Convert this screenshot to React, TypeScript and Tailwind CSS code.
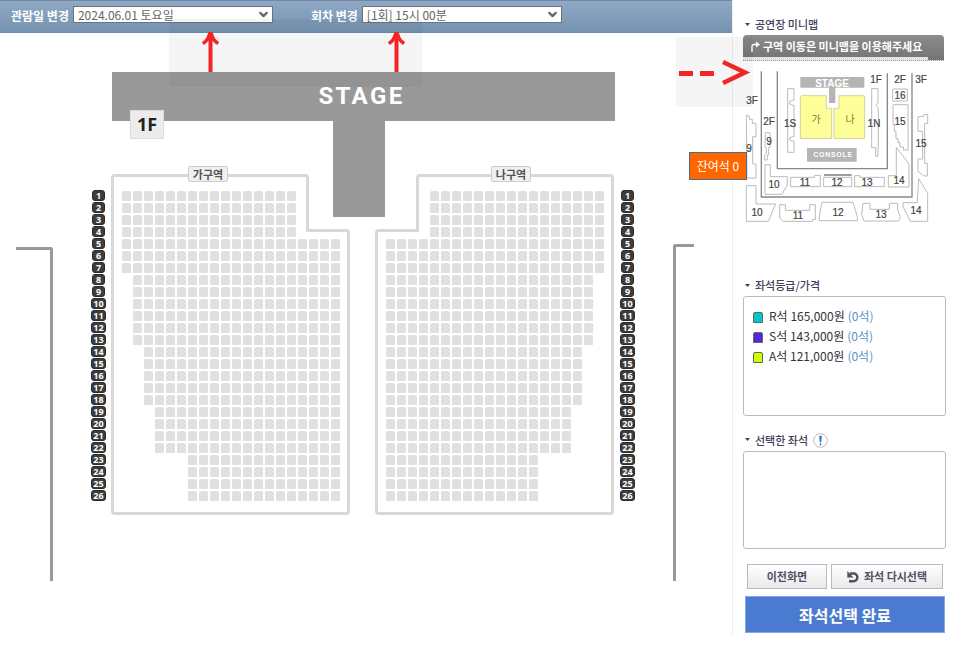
import type { ReactNode } from 'react';
import { ChevronDown } from 'lucide-react';

const ROWS = 26;
const COLS = 20;

// [last row of the band, first column, last column]
type Band = [number, number, number];

const sectionA: Band[] = [
  [4, 0, 15],
  [7, 0, 19],
  [13, 1, 19],
  [18, 2, 19],
  [22, 3, 19],
  [26, 6, 19],
];

const sectionB: Band[] = [
  [4, 4, 19],
  [7, 0, 19],
  [13, 0, 18],
  [18, 0, 17],
  [22, 0, 16],
  [26, 0, 13],
];

const grades = [
  { name: 'R석', price: '165,000원', left: '(0석)', color: 'bg-[#00c8c8]' },
  { name: 'S석', price: '143,000원', left: '(0석)', color: 'bg-[#5527dd]' },
  { name: 'A석', price: '121,000원', left: '(0석)', color: 'bg-[#ccff00]' },
];

const rowList = Array.from({ length: ROWS }, (_, i) => i + 1);
const colList = Array.from({ length: COLS }, (_, i) => i);

function HeaderSelect({ id, label, value }: { id: string; label: string; value: string }) {
  return (
    <div className="flex items-start gap-1">
      <label
        htmlFor={id}
        className="h-[20px] text-xs leading-[20px] font-bold whitespace-nowrap text-white"
      >
        {label}
      </label>
      <div className="relative">
        <select
          id={id}
          className="block h-[17px] w-[200px] appearance-none border border-[#6f7377] bg-white pl-[4px] text-xs leading-[15px] font-normal text-[#666]"
        >
          <option>{value}</option>
        </select>
        <ChevronDown
          className="pointer-events-none absolute top-[2px] right-[3px] h-[13px] w-[13px] text-[#666]"
          strokeWidth={4}
        />
      </div>
    </div>
  );
}

function UpArrow() {
  return (
    <svg width="18" height="40" viewBox="0 0 18 40" fill="none" stroke="#f22424">
      <path d="M8.500 4V40" strokeWidth="4" />
      <path d="M0.800 11.500C4 9.500 7 6.500 8.500 2C10 6.500 13 9.500 16.200 11.500" strokeWidth="3.500" />
      <path d="M6.500 0H10.500L13.500 8H3.500Z" fill="#f22424" strokeWidth="0" />
    </svg>
  );
}

function RowNumbers() {
  return (
    <ol className="mt-[16px] flex w-[15px] flex-col items-center gap-px">
      {rowList.map((n) => (
        <li
          key={n}
          className={`flex h-[11px] items-center justify-center rounded-[3px] border border-[#2b2b2b] bg-[#3d3d3d] font-['Noto_Sans'] text-[9px] leading-[9px] font-bold text-white ${
            n < 10 ? 'w-[13px]' : 'w-[15px]'
          }`}
        >
          {n}
        </li>
      ))}
    </ol>
  );
}

function Section({ name, bands, mirrored }: { name: string; bands: Band[]; mirrored?: boolean }) {
  return (
    <section className="relative flow-root h-[342px] w-[239px]" aria-label={name}>
      <svg
        className={`absolute inset-0 ${mirrored ? '-scale-x-100' : ''}`}
        width="239"
        height="342"
        viewBox="0 0 239 342"
        fill="none"
        stroke="#d8d8d8"
        strokeWidth="3"
      >
        <path d="M4 1.500H194Q196.500 1.500 196.500 4V56.500H235Q237.500 56.500 237.500 59V337Q237.500 339.500 235 339.500H4Q1.500 339.500 1.500 337V4Q1.500 1.500 4 1.500Z" />
      </svg>
      <div
        className={`relative -mt-[8px] flex justify-center ${mirrored ? 'ml-auto w-[206px]' : 'w-[194px]'}`}
      >
        <h2 className="h-4 rounded-[2px] border border-[#ccc] bg-[#f0f0f0] px-1 text-[11px] leading-[14px] font-bold text-[#555]">
          {name}
        </h2>
      </div>
      <div className="relative mt-[9px] ml-[11px] flex flex-col gap-[2px]">
        {rowList.map((row) => {
          const band = bands.find(([last]) => row <= last)!;
          return (
            <div key={row} className="flex gap-[2px]">
              {colList.map((col) => (
                <span
                  key={col}
                  className={`h-[10px] w-[9px] rounded-t-[2px] ${
                    col >= band[1] && col <= band[2] ? 'bg-[#e0e0e0]' : ''
                  }`}
                />
              ))}
            </div>
          );
        })}
      </div>
    </section>
  );
}

function SeatMap() {
  return (
    <div className="pr-[38px] pl-4">
      <div className="mx-auto w-[678px] pt-[39px]">
        <div className="relative ml-[96px] h-[49px] w-[503px] bg-[#999]">
          <p className="pr-1 text-center font-['Roboto'] text-2xl leading-[49px] font-bold tracking-widest text-white">
            STAGE
          </p>
          <div className="absolute top-[49px] left-[221px] h-[96px] w-[52px] bg-[#999]" />
          <div className="absolute top-[38px] left-[18px] h-[29px] w-[34px] border border-[#ddd] bg-[#ececec] text-center font-['Noto_Sans'] text-lg leading-[27px] font-bold text-[#222]">
            1F
          </div>
        </div>
        <div className="mt-[53px] flex items-start">
          <div className="mt-[73px] h-[334px] w-[37px] rounded-tr-[3px] border-t-[3px] border-r-[3px] border-[#999]" />
          <div className="ml-[38px]">
            <RowNumbers />
          </div>
          <div className="ml-[5px]">
            <Section name="가구역" bands={sectionA} />
          </div>
          <div className="ml-[25px]">
            <Section name="나구역" bands={sectionB} mirrored />
          </div>
          <div className="ml-[6px]">
            <RowNumbers />
          </div>
          <div className="mt-[70px] ml-[38px] h-[337px] w-[21px] rounded-tl-[3px] border-t-[3px] border-l-[3px] border-[#999]" />
        </div>
      </div>
    </div>
  );
}

const mapLabels: [number, number, string][] = [
  [16, 44, '3F'],
  [33, 65, '2F'],
  [140, 23, '1F'],
  [164, 23, '2F'],
  [185, 23, '3F'],
  [54, 67, '1S'],
  [138, 67, '1N'],
  [164, 39, '16'],
  [164, 65, '15'],
  [185, 87, '15'],
  [33, 85, '9'],
  [13, 92, '9'],
  [38, 128, '10'],
  [69, 126, '11'],
  [101, 126, '12'],
  [131, 126, '13'],
  [163, 124, '14'],
  [21, 156, '10'],
  [62, 159, '11'],
  [102, 156, '12'],
  [145, 158, '13'],
  [180, 154, '14'],
];

function MiniMap() {
  return (
    <svg
      width="200"
      height="170"
      viewBox="7 1 200 170"
      className="block font-['Liberation_Sans']"
      role="img"
      aria-label="공연장 미니맵"
    >
      <g transform="scale(0.33333)" fill="none" strokeWidth="3">
        <g stroke="#888" strokeWidth="4">
          <path d="M76 34V411H528V40" />
          <path d="M124 34V326H454V40" />
          <path d="M264 345H347" strokeWidth="5" />
        </g>
        <path d="M193 51H385V83H298V129H279V83H193Z" fill="#b5b5b5" />
        <path d="M213 264H362V305H213Z" fill="#b5b5b5" />
        <g fill="#ffff99" stroke="#d2d2a0">
          <path d="M196 107H271V145H287V235H193V110Z" />
          <path d="M386 110L383 107H309V145H294V235H386Z" />
        </g>
        <g stroke="#bbb" strokeLinejoin="round" fill="#fff">
          <path d="M155 86H174V120L161 124V132L174 137V229L161 233V240L174 244V277H155Z" />
          <path d="M407 86H426V128L420 136L427 146V263H426V289H419V263H407Z" />
          <path d="M472 87H514V123H470V89Z" />
          <path d="M472 134H516V270H502V261H492V248H486V236H480V214H475V194H471V138Z" />
          <path d="M481 262L519 312V381H457V347H481Z" />
          <path d="M356 347H372V352H445V380H356Z" />
          <path d="M263 352H347V380H263Z" />
          <path d="M164 352H236V346H253V380H164Z" />
          <path d="M87 314H103V350H154V374L138 403H87Z" />
          <path d="M88 218H102V262H98V285H94V300H86V287L91 280V266L87 258Z" />
          <path d="M31 166L40 168V178H49V190H60V230H50V312H60V354H33Z" />
          <path d="M31 377H60V432H119L97 484H31Z" />
          <path d="M131 434H148V451H221V434H238V478H230V484H140L131 474Z" />
          <path d="M258 427H351L364 470V482H250V470Z" />
          <path d="M381 430H402V448H460V430H485V450L493 470L488 483H384L377 464Z" />
          <path d="M548 356L575 400V484H523L501 440V428H544Z" />
          <path d="M575 164V190H566V310H574V348H564L546 334V297H560V214H546V170H562V164Z" />
        </g>
      </g>
      <g fontSize="10" fill="#444" stroke="#444" strokeWidth="0.200" textAnchor="middle">
        {mapLabels.map(([x, y, text]) => (
          <text key={`${x}-${y}`} x={x} y={y}>
            {text}
          </text>
        ))}
      </g>
      <g fontFamily="'Noto Sans CJK KR', sans-serif" fontSize="10" fill="#77773c" textAnchor="middle">
        <text x="80" y="63">가</text>
        <text x="114" y="63">나</text>
      </g>
      <g fontWeight="bold" fill="#fff" textAnchor="middle">
        <text x="96" y="27" fontSize="10">STAGE</text>
        <text x="97" y="97" fontSize="7" className="tracking-widest">CONSOLE</text>
      </g>
    </svg>
  );
}

function PanelTitle({ children }: { children: ReactNode }) {
  return (
    <h2 className="flex h-[21px] items-center gap-[5px] pl-[2px] text-[11px] leading-[21px] font-medium text-[#3f4058]">
      <svg width="5" height="4" viewBox="0 0 5 4" fill="#3f4058">
        <path d="M0 0H5L2.500 3Z" />
      </svg>
      {children}
    </h2>
  );
}

function Sidebar() {
  return (
    <aside className="relative w-[234px] shrink-0 self-start border-l border-[#eee] pt-[14px] pr-[20px] pb-[2px] pl-[10px]">
      <PanelTitle>공연장 미니맵</PanelTitle>
      <div className="mr-[2px] h-[26px]">
        <p className="flex h-[22px] items-center gap-[3px] rounded-t-[4px] bg-linear-to-b from-[#8c8c8c] to-[#777] pl-[8px] text-[11px] font-bold whitespace-nowrap text-white">
          <svg width="9" height="11" viewBox="0 0 9 11" fill="none" stroke="#fff">
            <path d="M1 11V5.500Q1 3.500 3 3.500H7" strokeWidth="1.500" />
            <path d="M5 0.500L9 3.500L5 6.500Z" fill="#fff" strokeWidth="0" />
          </svg>
          구역 이동은 미니맵을 이용해주세요
        </p>
        <div className="flex h-[4px] justify-end border-b border-dotted border-[#999] bg-[#e6e6e6]">
          <div className="w-[16px] bg-[#777]" />
        </div>
      </div>
      <MiniMap />

      <div className="mt-[44px]">
        <PanelTitle>좌석등급/가격</PanelTitle>
      </div>
      <ul className="h-[120px] rounded-[3px] border border-[#bbb] pt-[9px] pl-[9px]">
        {grades.map((g) => (
          <li key={g.name} className="flex h-5 items-center text-xs text-[#333]">
            <span className={`mt-[2px] mr-[6px] h-[11px] w-[10px] rounded-t-[2px] border border-[#666] ${g.color}`} />
            {g.name} {g.price}
            <span className="ml-[3px] text-[#5b93c4]">{g.left}</span>
          </li>
        ))}
      </ul>

      <div className="mt-[13px] flex h-[22px] items-center gap-[5px]">
        <PanelTitle>선택한 좌석</PanelTitle>
        <svg width="15" height="15" viewBox="0 0 15 15">
          <circle cx="7.500" cy="7.500" r="6.800" fill="#fff" stroke="#bbb" />
          <path d="M6.500 3H8.500L8 9H7Z M7 10.500H8V12H7Z" fill="#2d73c8" stroke="#2d73c8" strokeWidth="0.500" />
        </svg>
      </div>
      <div className="h-[98px] rounded-[3px] border border-[#bbb]" />

      <div className="mt-[15px] flex gap-1 pr-[3px] pl-1 text-[11px] font-bold text-[#50515f]">
        <button
          type="button"
          className="h-[25px] w-[80px] border border-[#b8b9c2] bg-linear-to-b from-white to-[#e9e9e9]"
        >
          이전화면
        </button>
        <button
          type="button"
          className="flex h-[25px] flex-1 items-center justify-center gap-[5px] border border-[#b8b9c2] bg-linear-to-b from-white to-[#e9e9e9]"
        >
          <svg width="12" height="12" viewBox="0 0 12 12" fill="none" stroke="#50515f" strokeWidth="2.500">
            <path d="M3 2.500H6.500A3.800 3.800 0 0 1 6.500 10.200H2" />
            <path d="M0.300 0V6.500H6.500Z" fill="#50515f" strokeWidth="0" />
          </svg>
          좌석 다시선택
        </button>
      </div>
      <div className="mt-[7px] pr-[1px] pl-[2px]">
        <button
          type="button"
          className="block h-[37px] w-full border border-[#86a8de] bg-[#4a7bd0] text-base font-bold text-white"
        >
          좌석선택 완료
        </button>
      </div>

      {/* pointer towards the mini map */}
      <div className="pointer-events-none absolute top-[37px] -left-[57px] h-[70px] w-[77px] bg-black/4">
        <svg width="77" height="70" viewBox="0 0 77 70" fill="none" stroke="#f22424">
          <path d="M3 36.500H17M24 36.500H38" strokeWidth="5" />
          <path d="M47 25L69 35.500L47 46" strokeWidth="4.500" />
        </svg>
      </div>
      <div className="absolute top-[152px] -left-[44px] h-[28px] w-[58px] border border-[#4a6d8c] bg-[#ff6600] text-center text-xs leading-[26px] whitespace-nowrap text-white">
        잔여석 0
      </div>
    </aside>
  );
}

export default function App() {
  return (
    <div className="flex min-h-screen bg-white font-['Noto_Sans_CJK_KR',sans-serif]">
      <main className="relative min-w-0 flex-1">
        <header className="flex h-[33px] gap-[38px] border-t border-b border-t-[#7088a5] border-b-[#6f8daa] bg-linear-to-b from-[#8fa9c4] to-[#7593b1] pt-[5px] pl-[11px]">
          <HeaderSelect id="date" label="관람일 변경" value="2024.06.01 토요일" />
          <HeaderSelect id="round" label="회차 변경" value="[1회] 15시 00분" />
        </header>
        <SeatMap />
        {/* hint over the two drop-downs */}
        <div className="pointer-events-none absolute top-[19px] left-[169px] flex h-[68px] w-[253px] justify-between bg-black/4 pt-[13px] pr-[16px] pl-[33px]">
          <UpArrow />
          <UpArrow />
        </div>
      </main>
      <Sidebar />
    </div>
  );
}
